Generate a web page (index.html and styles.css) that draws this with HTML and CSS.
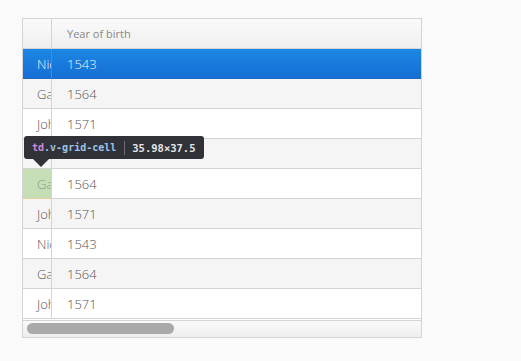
FILE: index.html
```html
<!DOCTYPE html>
<html>
<head>
<meta charset="utf-8">
<link rel="stylesheet" href="styles.css">
</head>
<body>
<div class="stage">
  <div class="grid">
    <div class="row header">
      <div class="cell frozen"></div>
      <div class="cell main">Year of birth</div>
    </div>
    <div class="row selected"><div class="cell frozen">Nicolaus</div><div class="cell main">1543</div></div>
    <div class="row stripe"><div class="cell frozen">Galileo</div><div class="cell main">1564</div></div>
    <div class="row"><div class="cell frozen">Johannes</div><div class="cell main">1571</div></div>
    <div class="row stripe"><div class="cell frozen">Nicolaus</div><div class="cell main">1543</div></div>
    <div class="row"><div class="cell frozen inspected">Galileo</div><div class="cell main">1564</div></div>
    <div class="row stripe"><div class="cell frozen">Johannes</div><div class="cell main">1571</div></div>
    <div class="row"><div class="cell frozen">Nicolaus</div><div class="cell main">1543</div></div>
    <div class="row stripe"><div class="cell frozen">Galileo</div><div class="cell main">1564</div></div>
    <div class="row"><div class="cell frozen">Johannes</div><div class="cell main">1571</div></div>
    <div class="scroll"><div class="thumb"></div></div>
  </div>
  <div class="tooltip">
    <span class="tag">td</span><span class="cls">.v-grid-cell</span><span class="sep"></span><span class="dim">35.98×37.5</span>
    <span class="arrow"></span>
  </div>
</div>
</body>
</html>
```

FILE: styles.css
```css
html, body {
  margin: 0;
  padding: 0;
  background: #fafafa;
}
body {
  padding: 18px 0 0 22px;
  font-family: "Open Sans", "DejaVu Sans", sans-serif;
}
.stage {
  position: relative;
  width: 400px;
}
.grid {
  width: 398px;
  height: 318px;
  border: 1px solid #d4d4d4;
  background: #fff;
  display: flex;
  flex-direction: column;
}
.row {
  display: flex;
  height: 29px;
  border-bottom: 1px solid #d4d4d4;
  background: #fff;
  flex: none;
}
.row.stripe {
  background: #f5f5f5;
}
.row.header {
  background: linear-gradient(#fafafa, #efefef);
}
.row.selected {
  background: linear-gradient(#1b87e3, #166ed5);
  border-bottom-color: #1d6cc4;
}
.cell {
  display: flex;
  align-items: center;
  overflow: hidden;
  white-space: nowrap;
  font-size: 13px;
  font-weight: 300;
  color: #555;
}
.frozen {
  width: 28px;
  flex: none;
  border-right: 1px solid #d4d4d4;
  padding-left: 14px;
  box-sizing: border-box;
  width: 29px;
}
.main {
  flex: 1;
  padding-left: 15px;
}
.header .main {
  font-size: 11px;
  font-weight: 400;
  color: #888;
}
.selected .cell {
  color: #eef5fd;
}
.selected .frozen {
  border-right-color: #3f8fde;
}
.inspected {
  background: #c6deb6;
  color: #8a9886;
  box-shadow: inset 0 -1px 0 #e6cf9d;
  margin-bottom: -1px;
  height: 30px;
}
.scroll {
  margin-top: 1px;
  flex: 1;
  border-top: 1px solid #d4d4d4;
  background: linear-gradient(#f9f9f9, #eeeeee);
  padding: 2px 0 0 4px;
  box-sizing: border-box;
}
.thumb {
  width: 147px;
  height: 11px;
  border-radius: 6px;
  background: #a9a9a9;
}
.tooltip {
  position: absolute;
  left: 2px;
  top: 118px;
  height: 23px;
  padding: 0 8px;
  box-sizing: border-box;
  background: #303238;
  border-radius: 3px;
  display: flex;
  align-items: center;
  font-family: "DejaVu Sans Mono", "Liberation Mono", monospace;
  font-size: 10px;
  font-weight: bold;
  white-space: nowrap;
}
.tag { color: #d38ad9; }
.cls { color: #9cc3e8; }
.sep {
  width: 1px;
  height: 14px;
  background: #6a6c72;
  margin: 0 7px 0 8px;
}
.dim {
  color: #e3e4e6;
  font-size: 10.5px;
}
.arrow {
  position: absolute;
  left: 9px;
  top: 23px;
  width: 0;
  height: 0;
  border-left: 8px solid transparent;
  border-right: 8px solid transparent;
  border-top: 8px solid #303238;
}
```
